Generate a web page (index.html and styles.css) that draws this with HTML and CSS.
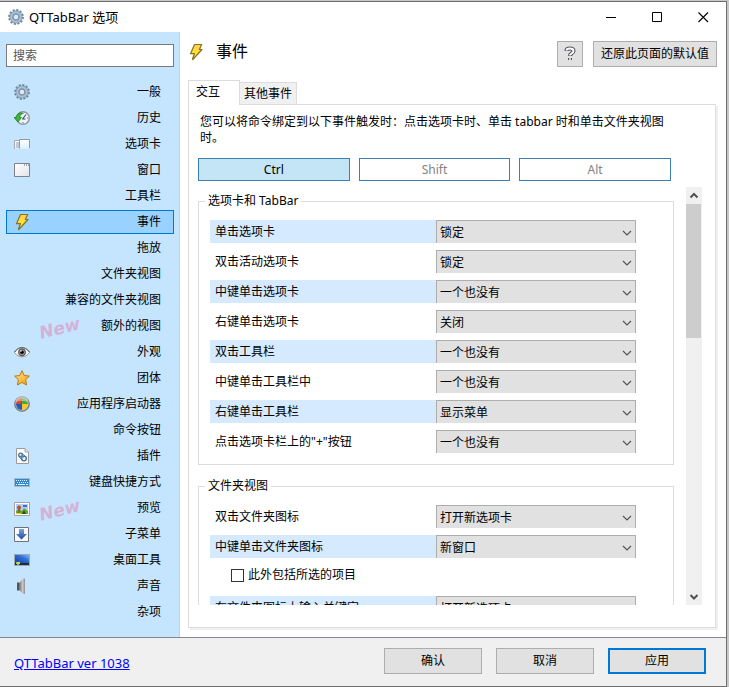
FILE: index.html
```html
<!DOCTYPE html>
<html lang="zh-CN">
<head>
<meta charset="utf-8">
<meta name="viewport" content="width=device-width, initial-scale=1">
<title>QTTabBar 选项</title>
<link rel="stylesheet" href="styles.css">
</head>
<body>
<svg width="0" height="0" class="defs" aria-hidden="true">
  <defs>
    <linearGradient id="boltFill" x1="0" y1="0" x2="0" y2="1"><stop offset="0" stop-color="#ffce4a"/><stop offset="1" stop-color="#fff02a"/></linearGradient>
    <linearGradient id="starFill" x1="0" y1="0" x2="1" y2="1"><stop offset="0" stop-color="#ffe680"/><stop offset="1" stop-color="#f79a10"/></linearGradient>
    <linearGradient id="fadeFill" x1="0" y1="0" x2="0" y2="1"><stop offset="0" stop-color="#fff"/><stop offset="1" stop-color="#fff" stop-opacity=".4"/></linearGradient>
    <linearGradient id="paneFill" x1="0" y1="0" x2="1" y2="1"><stop offset="0" stop-color="#fff"/><stop offset="1" stop-color="#e4e4e8"/></linearGradient>
    <linearGradient id="screenFill" x1="0" y1="1" x2="1" y2="0"><stop offset="0" stop-color="#123f9c"/><stop offset=".6" stop-color="#2f6fd8"/><stop offset="1" stop-color="#7fb4f4"/></linearGradient>
    <linearGradient id="hornFill" x1="0" y1="0" x2="1" y2="0"><stop offset="0" stop-color="#6a6a6a"/><stop offset=".6" stop-color="#c9c9c9"/><stop offset="1" stop-color="#909090"/></linearGradient>
    <linearGradient id="arrowFill" x1="0" y1="0" x2="0" y2="1"><stop offset="0" stop-color="#7fa4dc"/><stop offset="1" stop-color="#1e4c9e"/></linearGradient>
    <symbol id="gear" viewBox="0 0 16 16">
      <circle cx="8" cy="8" r="6.9" fill="none" stroke="#6f8aa3" stroke-width="2" stroke-dasharray="2.2 1.41"/>
      <circle cx="8" cy="8" r="4.7" fill="none" stroke="#7e98b1" stroke-width="3.6"/>
      <circle cx="8" cy="8" r="4.7" fill="none" stroke="#adc0d1" stroke-width="2"/>
      <circle cx="8" cy="8" r="2.8" fill="#dcebf6" stroke="#7890a6"/>
    </symbol>
    <symbol id="bolt" viewBox="0 0 16 18">
      <path d="M6.500 1.500H13.700L11.300 6.500H14L4.800 16.500L4.500 16L6.500 10.700H2.500Z" fill="url(#boltFill)" stroke="#857322" stroke-width="1.200" stroke-linejoin="round"/>
    </symbol>
    <symbol id="chevron" viewBox="0 0 10 6"><path d="M1 1 5 5 9 1" fill="none" stroke="#555" stroke-width="1.2"/></symbol>
  </defs>
</svg>
<div class="window">
  <header class="titlebar">
    <svg class="icon" aria-hidden="true"><use href="#gear"/></svg>
    <span class="caption">QTTabBar 选项</span>
    <button class="sysbtn" type="button" aria-label="最小化"><svg viewBox="0 0 11 11"><path d="M0 5.5H10" stroke="#000"/></svg></button>
    <button class="sysbtn" type="button" aria-label="最大化"><svg viewBox="0 0 11 11"><path d="M.5 .5H9.500V9.500H.5Z" fill="none" stroke="#000"/></svg></button>
    <button class="sysbtn" type="button" aria-label="关闭"><svg viewBox="0 0 11 11"><path d="M.5 .5 10 10M10 .5 .5 10" stroke="#000" stroke-width="1.1"/></svg></button>
  </header>

  <div class="body">
    <aside class="sidebar">
      <input class="search" type="search" placeholder="搜索" aria-label="搜索">
      <nav class="nav">
        <a href="#"><svg class="icon"><use href="#gear"/></svg>一般</a>
        <a href="#"><svg class="icon" viewBox="0 0 16 16"><circle cx="9" cy="8" r="6.300" fill="#eef3f7" stroke="#8c979d" stroke-width="1.400"/><path d="M9 3v1M14 8h-1M9 13v-1" stroke="#666"/><path d="M9 8.500 12 4.500M8 9h3.500" stroke="#34526b" stroke-width="1.200"/><path d="M0 7.500H2C2.500 4.500 5 2.500 8.500 3.200 6.500 4.500 5.800 6 5.800 7.500H7.500L4 12Z" fill="#3cb636" stroke="#15801a" stroke-width=".8"/></svg>历史</a>
        <a href="#"><svg class="icon" viewBox="0 0 16 16"><path d="M.5 13V4.500H5.500V13" fill="url(#fadeFill)" stroke="#a4a9b2"/><path d="M2 6h3v6H2z" fill="#b4b6c0" opacity=".7"/><path d="M5.500 13V3.500H15.500V13Z" fill="url(#fadeFill)"/><path d="M5.500 12V3.500H15.500V12" fill="none" stroke="#9398a4"/></svg>选项卡</a>
        <a href="#"><svg class="icon" viewBox="0 0 16 16"><path d="M.5 1.500H15.500V14.500H.5Z" fill="url(#paneFill)" stroke="#7d828c"/><path d="M10 3h1M12 3h1M14 3h1" stroke="#445a80"/></svg>窗口</a>
        <a href="#">工具栏</a>
        <a href="#" class="current" aria-current="page"><svg class="icon bolt"><use href="#bolt"/></svg>事件</a>
        <a href="#">拖放</a>
        <a href="#">文件夹视图</a>
        <a href="#">兼容的文件夹视图</a>
        <a href="#"><span class="new">New</span>额外的视图</a>
        <a href="#"><svg class="icon" viewBox="0 0 16 16"><path d="M.5 8.500C3 4.500 6 3.800 8 3.800S13 4.500 15.500 8.500C13 12 10 12.800 8 12.800S3 12 .5 8.500Z" fill="#f6f6f6" stroke="#888"/><path d="M.5 8C3 4.500 6 3.600 8 3.600S13 4.500 15.500 8" fill="none" stroke="#555"/><circle cx="8" cy="8.300" r="3.500" fill="#999" stroke="#444"/><circle cx="8" cy="8.300" r="1.800" fill="#000"/><circle cx="7" cy="7" r=".8" fill="#fff"/></svg>外观</a>
        <a href="#"><svg class="icon" viewBox="0 0 16 16"><path d="M8 .7 10.200 5.500 15.400 6.100 11.600 9.700 12.600 15 8 12.400 3.400 15 4.400 9.700 .6 6.100 5.800 5.500Z" fill="url(#starFill)" stroke="#b57a17" stroke-linejoin="round"/></svg>团体</a>
        <a href="#"><svg class="icon" viewBox="0 0 16 16"><circle cx="8" cy="8" r="7.200" fill="#ccd0d2" stroke="#7d8387" stroke-width="1.500"/><path d="M8 8V2A6 6 0 0 0 2 8Z" fill="#d8442a"/><path d="M8 8V2A6 6 0 0 1 14 8Z" fill="#4fa535"/><path d="M8 8V14A6 6 0 0 1 2 8Z" fill="#2459b8"/><path d="M8 8V14A6 6 0 0 0 14 8Z" fill="#f5c928"/><path d="M1.500 6A6.500 6.500 0 0 1 14.500 6Q8 4 1.500 6Z" fill="#fff" opacity=".4"/></svg>应用程序启动器</a>
        <a href="#">命令按钮</a>
        <a href="#"><svg class="icon" viewBox="0 0 16 16"><path d="M2.500 .5H11L14.500 4V15.500H2.500Z" fill="#fafafa" stroke="#9a9a9a"/><path d="M11 .5V4H14.500" fill="#ddd" stroke="#aaa"/><circle cx="6.500" cy="7" r="1.800" fill="#fff" stroke="#3f6d9c" stroke-width="1.300"/><circle cx="10" cy="10.500" r="2.300" fill="#fff" stroke="#3f6d9c" stroke-width="1.300"/><path d="M5 8.500 8 12M8 5.500 12 9" stroke="#3f6d9c"/><path d="m6.500 7 3.500 3.500" stroke="#6f91b4"/></svg>插件</a>
        <a href="#"><svg class="icon" viewBox="0 0 16 16"><path d="M.5 4.500H15.500V12.500H.5Z" fill="#2f86cf" stroke="#a9b9c6"/><path d="M2 6.500H14M3 8.500H14" stroke="#e8f5ff" stroke-dasharray="1 1"/><path d="M2 10.500h1M4 10.500h7M12 10.500h2" stroke="#e8f5ff"/></svg>键盘快捷方式</a>
        <a href="#"><span class="new">New</span><svg class="icon" viewBox="0 0 16 16"><path d="M.5 2.500H15.500V15.500H.5Z" fill="#fff" stroke="#a3a3a3"/><path d="M2 4H14V14H2Z" fill="#a9d1fa"/><path d="M2 11 5 9 8 11 10 8 14 11V14H2Z" fill="#62a832"/><path d="m8 14 2-4 2 4z" fill="#244f1d"/><circle cx="5" cy="7.500" r="2" fill="#d34426"/><path d="M5 9v4" stroke="#7e3b13"/><path d="M9 6h4" stroke="#4b67c9" stroke-width="2"/><path d="M2 13.500h5" stroke="#e7ca35"/></svg>预览</a>
        <a href="#"><svg class="icon" viewBox="0 0 16 16"><path d="M.5 1.500H14.500V15.500H.5Z" fill="#f7f9fc" stroke="#6f7378"/><path d="M5 3H10V8H13L7.500 13.500 2 8H5Z" fill="url(#arrowFill)"/></svg>子菜单</a>
        <a href="#"><svg class="icon" viewBox="0 0 16 16"><path d="M0 2H16V14H0Z" fill="#9fa8b2"/><path d="M1 3H15V11H1Z" fill="url(#screenFill)"/><path d="M1 11H15V13H1Z" fill="#252a32"/><path d="M2 10h2v2H2z" fill="#8fd44b"/><path d="M4 10h2v2H4z" fill="#e8cc4b"/><path d="M3 12h2v1H3z" fill="#4fc3f0"/></svg>桌面工具</a>
        <a href="#"><svg class="icon" viewBox="0 0 16 16"><path d="M3 4.500H5V12.500H3Z" fill="#555"/><path d="M5 5 9.500 .5H11V16H9.500L5 12Z" fill="url(#hornFill)"/></svg>声音</a>
        <a href="#">杂项</a>
      </nav>
    </aside>

    <main class="content">
      <div class="heading">
        <svg class="icon bolt" aria-hidden="true"><use href="#bolt"/></svg>
        <h1>事件</h1>
        <button class="btn help" type="button" aria-label="帮助"><svg viewBox="0 0 12 16"><path d="M2.500 5V4.500Q2.500 2.500 6 2.500T9.500 5Q9.500 6.500 7.500 7.500 6 8.500 6 10M6 12V14" fill="none" stroke="#55555f" stroke-width="4"/><path d="M2.500 4.500Q2.500 2.500 6 2.500T9.500 5Q9.500 6.500 7.500 7.500 6 8.500 6 9.500M6 12.300V13.700" fill="none" stroke="#fff" stroke-width="1.900"/></svg></button>
        <button class="btn restore" type="button">还原此页面的默认值</button>
      </div>
      <div class="tabs" role="tablist">
        <button type="button" role="tab" aria-selected="true">交互</button>
        <button type="button" role="tab" aria-selected="false">其他事件</button>
      </div>
      <section class="panel">
        <p class="intro">您可以将命令绑定到以下事件触发时：点击选项卡时、单击 tabbar 时和单击文件夹视图时。</p>
        <div class="modifiers">
          <button type="button" aria-pressed="true">Ctrl</button>
          <button type="button" aria-pressed="false">Shift</button>
          <button type="button" aria-pressed="false">Alt</button>
        </div>
        <div class="scroller">
          <div class="groups">
            <fieldset>
              <legend>选项卡和 TabBar</legend>
              <div class="row tint"><label for="a1">单击选项卡</label><span class="combo"><select id="a1"><option>锁定</option></select><svg><use href="#chevron"/></svg></span></div>
              <div class="row"><label for="a2">双击活动选项卡</label><span class="combo"><select id="a2"><option>锁定</option></select><svg><use href="#chevron"/></svg></span></div>
              <div class="row tint"><label for="a3">中键单击选项卡</label><span class="combo"><select id="a3"><option>一个也没有</option></select><svg><use href="#chevron"/></svg></span></div>
              <div class="row"><label for="a4">右键单击选项卡</label><span class="combo"><select id="a4"><option>关闭</option></select><svg><use href="#chevron"/></svg></span></div>
              <div class="row tint"><label for="a5">双击工具栏</label><span class="combo"><select id="a5"><option>一个也没有</option></select><svg><use href="#chevron"/></svg></span></div>
              <div class="row"><label for="a6">中键单击工具栏中</label><span class="combo"><select id="a6"><option>一个也没有</option></select><svg><use href="#chevron"/></svg></span></div>
              <div class="row tint"><label for="a7">右键单击工具栏</label><span class="combo"><select id="a7"><option>显示菜单</option></select><svg><use href="#chevron"/></svg></span></div>
              <div class="row"><label for="a8">点击选项卡栏上的"+"按钮</label><span class="combo"><select id="a8"><option>一个也没有</option></select><svg><use href="#chevron"/></svg></span></div>
            </fieldset>
            <fieldset>
              <legend>文件夹视图</legend>
              <div class="row"><label for="b1">双击文件夹图标</label><span class="combo"><select id="b1"><option>打开新选项卡</option></select><svg><use href="#chevron"/></svg></span></div>
              <div class="row tint"><label for="b2">中键单击文件夹图标</label><span class="combo"><select id="b2"><option>新窗口</option></select><svg><use href="#chevron"/></svg></span></div>
              <label class="check"><input type="checkbox">此外包括所选的项目</label>
              <div class="row tint"><label for="b3">在文件夹图标上输入关键字</label><span class="combo"><select id="b3"><option>打开新选项卡</option></select><svg><use href="#chevron"/></svg></span></div>
            </fieldset>
          </div>
          <div class="scrollbar" aria-hidden="true">
            <svg viewBox="0 0 16 17"><path d="M4.500 10.500 8 7 11.500 10.500" fill="none" stroke="#505050" stroke-width="2"/></svg>
            <div class="track"><div class="thumb"></div></div>
            <svg viewBox="0 0 16 17"><path d="M4.500 7 8 10.500 11.500 7" fill="none" stroke="#505050" stroke-width="2"/></svg>
          </div>
        </div>
      </section>
    </main>
  </div>

  <footer class="footer">
    <a href="#">QTTabBar ver 1038</a>
    <button class="btn" type="button">确认</button>
    <button class="btn" type="button">取消</button>
    <button class="btn primary" type="button">应用</button>
  </footer>
</div>
</body>
</html>
```
FILE: styles.css
```css
* { box-sizing: border-box; }

body {
  margin: 0;
  background: #c8c8c8;
  color: #000;
  font: 12px/16px "Noto Sans", "Noto Sans CJK SC", sans-serif;
}

button, input, select { font: inherit; color: inherit; border-radius: 0; }
button { padding: 0; margin: 0; }
.defs { position: absolute; }

.window {
  display: flex;
  flex-direction: column;
  height: calc(100vh - 1px);
  margin: 1px 2px 0 0;
  border: 1px solid #6e6e6e;
  border-left: 0;
  background: #fff;
}

.icon { width: 16px; height: 16px; flex: none; }
.icon.bolt { height: 18px; }

.titlebar { display: flex; align-items: center; height: 30px; padding-left: 8px; }
.caption { flex: 1; margin-left: 5px; font-size: 13px; }
.sysbtn {
  display: grid;
  place-items: center;
  width: 46px;
  height: 29px;
  border: 0;
  background: none;
}
.sysbtn svg { width: 11px; height: 11px; }

.body { display: flex; flex: 1; min-height: 0; }

.sidebar {
  flex: none;
  width: 180px;
  padding: 12px 5px 0 6px;
  border-right: 1px solid #c3d3e4;
  background: #c5e5ff;
}
.search {
  display: block;
  width: 100%;
  height: 23px;
  margin: 0;
  padding: 0 6px;
  border: 1px solid #7a7a7a;
  background: #fff;
  appearance: none;
}
.search::placeholder { color: #555; opacity: 1; }

.nav { display: flex; flex-direction: column; gap: 2px; margin-top: 13px; }
.nav a {
  position: relative;
  display: flex;
  align-items: center;
  justify-content: flex-end;
  height: 24px;
  padding: 0 12px 0 7px;
  border: 1px solid transparent;
  color: #000;
  text-decoration: none;
}
.nav .icon { margin-right: auto; }
.nav .current { border-color: #0078d7; background: #99d1ff; }
.new {
  position: absolute;
  left: 32px;
  top: 3px;
  color: #d4b2d8;
  font: italic bold 17px/20px "DejaVu Sans", sans-serif;
  transform: rotate(-14deg);
}

.content {
  display: flex;
  flex: 1;
  flex-direction: column;
  min-width: 0;
  padding: 9px 10px 9px 8px;
}
.heading { display: flex; height: 26px; margin-right: -1px; }
.heading .icon { margin-top: 2px; }
.heading h1 { flex: 1; margin: 0 0 0 12px; font-size: 16px; font-weight: 400; line-height: 20px; }

.btn {
  width: 98px;
  height: 26px;
  border: 1px solid #adadad;
  background: #e1e1e1;
}
.btn.help { display: grid; place-items: center; width: 26px; margin-right: 10px; }
.btn.help svg { width: 12px; height: 16px; }
.btn.restore { width: auto; padding: 0 7px; }
.btn.primary { border: 2px solid #0078d7; }

.tabs { display: flex; align-items: flex-end; margin-top: 13px; }
.tabs button {
  height: 22px;
  padding: 0 4px;
  border: 1px solid #dcdcdc;
  border-width: 1px 1px 0 0;
  background: #f0f0f0;
}
.tabs [aria-selected="true"] {
  position: relative;
  height: 25px;
  width: 52px;
  margin-bottom: -1px;
  padding: 0 12px 2px 0;
  border-left-width: 1px;
  background: #fff;
}

.panel {
  display: flex;
  flex: 1;
  flex-direction: column;
  min-height: 0;
  padding: 9px 13px 22px 9px;
  border: 1px solid #dcdcdc;
  box-shadow: 2px 2px 0 #f0f0f0;
}
.intro { margin: 0 20px 12px 2px; }
.modifiers { display: grid; grid-template-columns: repeat(3, 1fr); gap: 9px; margin-right: 31px; }
.modifiers button { height: 23px; border: 1px solid #3c7fb1; background: #fff; color: #838383; }
.modifiers [aria-pressed="true"] { background: #c4e5f6; color: #000; }

.scroller { display: flex; flex: 1; gap: 12px; min-height: 0; margin-top: 6px; overflow: hidden; }
.groups { flex: 1; min-width: 0; padding-top: 6px; }

fieldset {
  min-width: 0;
  margin: 0 0 13px;
  padding: 11px 37px 11px 11px;
  border: 1px solid #dcdcdc;
}
legend { margin-left: -5px; padding: 0 3px; line-height: 16px; }

.row { display: flex; height: 23px; }
.row + .row { margin-top: 7px; }
.row > label { flex: 1; padding-left: 5px; line-height: 23px; }
.tint > label { background: #d5eaff; }
.combo { position: relative; flex: none; width: 200px; }
.combo select {
  display: block;
  width: 100%;
  height: 23px;
  padding: 1px 20px 0 3px;
  border: 1px solid #adadad;
  border-bottom: 0;
  background: #e1e1e1;
  appearance: none;
}
.combo svg { position: absolute; right: 4px; top: 10px; width: 10px; height: 6px; pointer-events: none; }

.check { display: flex; align-items: center; gap: 4px; height: 16px; margin: 9px 0 13px 21px; }
.check input {
  width: 13px;
  height: 13px;
  margin: 0;
  border: 1px solid #333;
  background: #fff;
  appearance: none;
}

.scrollbar { display: flex; flex: none; flex-direction: column; width: 16px; background: #f0f0f0; }
.scrollbar svg { width: 16px; height: 17px; }
.track { flex: 1; }
.thumb { width: 15px; height: 35%; background: #cdcdcd; }

.footer {
  display: flex;
  flex: none;
  align-items: center;
  gap: 14px;
  height: 49px;
  padding: 0 20px 2px 14px;
  border-top: 1px solid #828790;
  background: #f0f0f0;
}
.footer a { margin-right: auto; padding-top: 4px; color: #00f; font-size: 13px; }
```
